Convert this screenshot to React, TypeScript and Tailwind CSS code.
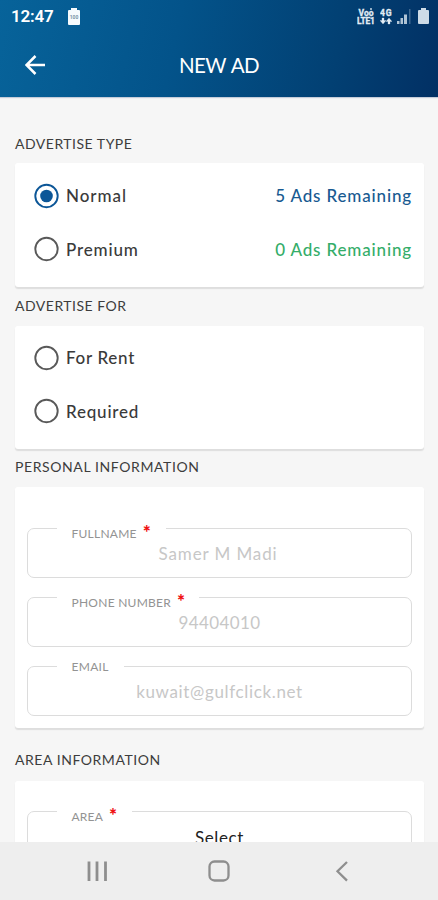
import type { ReactNode } from 'react';

function StatusBar() {
  return (
    <div className="flex h-8 items-center pl-[11px] pr-[9px] text-white">
      <span className="w-[57px] font-[Roboto,sans-serif] text-[17px] leading-none font-semibold tracking-[-0.200px]">12:47</span>
      <svg width="12" height="17" viewBox="0 0 12 17">
        <path d="M3 0h6v2h2q1 0 1 1v13q0 1-1 1H1q-1 0-1-1V3q0-1 1-1h2z" fill="#f6fafd" />
        <text x="6" y="11" textAnchor="middle" fontSize="5" fontWeight="700" fontFamily="Roboto, sans-serif" fill="#7894a8">100</text>
      </svg>
      <div className="ml-auto flex items-center font-[Roboto,sans-serif] font-bold text-[#e3edf5]">
        <svg className="mr-[5px]" width="18" height="17" viewBox="0 0 18 17" fill="#e3edf5" stroke="#e3edf5" strokeWidth="0.300">
          <text x="1.500" y="7.500" fontSize="8.500" fontWeight="700" textLength="15" fontFamily="Roboto, sans-serif">Voo</text>
          <path d="M14 0v2" strokeWidth="1.300" />
          <text x="0" y="16" fontSize="8.500" fontWeight="700" textLength="18" fontFamily="Roboto, sans-serif">LTE1</text>
        </svg>
        <svg width="12" height="17" viewBox="0 0 12 17" fill="#e3edf5" stroke="#e3edf5" strokeWidth="0.300">
          <text x="0" y="7.500" fontSize="8.500" fontWeight="700" textLength="11.500" fontFamily="Roboto, sans-serif">4G</text>
          <path d="M2 10h2v2.500h2l-3 3.500-3-3.500h2zM8 16v-2.500H6L9 10l3 3.500h-2V16z" />
        </svg>
        <svg className="ml-[5px]" width="14" height="15" viewBox="0 0 14 15" fill="#cfdde8">
          <path d="M0 12h2.500v3H0zM3.500 9H6v6H3.500zM7 5.500h3V15H7z" opacity=".85" />
          <path d="M12 0h1.500v15H12z" opacity=".3" />
        </svg>
        <svg className="ml-[7px]" width="11" height="16" viewBox="0 0 11 16">
          <path d="M3 0h5v2h2q1 0 1 1v12q0 1-1 1H1q-1 0-1-1V3q0-1 1-1h2z" fill="#cddbe7" />
        </svg>
      </div>
    </div>
  );
}

function Heading({ children, className }: { children: ReactNode; className: string }) {
  return <h2 className={`pl-[15px] text-[14px] leading-5 text-[#3d3d3d] ${className}`}>{children}</h2>;
}

function Card({ children, className }: { children: ReactNode; className: string }) {
  return (
    <section className={`ml-[15px] mr-[14px] rounded-[3px] bg-white shadow-[0_2px_1px_#dedede] ${className}`}>
      {children}
    </section>
  );
}

function Option({ label, tracking, checked, note, noteColor }: {
  label: string; tracking: string; checked?: boolean; note?: string; noteColor?: string;
}) {
  return (
    <div className="flex h-[53.500px] items-center pl-[18.500px] pr-[12px] text-[17px] font-medium">
      <svg width="26" height="26" viewBox="0 0 26 26" fill="none">
        <circle cx="12.500" cy="13" r="11.200" stroke={checked ? '#0c5697' : '#595959'} strokeWidth="1.900" />
        {checked && <circle cx="12.500" cy="13" r="6.300" fill="#0c5697" />}
      </svg>
      <span className={`ml-[6.500px] text-[#3a3a3a] ${tracking}`}>{label}</span>
      {note && <span className={`ml-auto tracking-[0.850px] ${noteColor}`}>{note}</span>}
    </div>
  );
}

function Field({ label, required, value, notch, labelClass, valueClass }: {
  label: string; required?: boolean; value: string; notch: string; labelClass: string; valueClass: string;
}) {
  return (
    <fieldset className="h-[50px] shrink-0 rounded-[7px] border-[1.500px] border-[#dcdcdc]">
      <legend className={`ml-[29px] h-px ${notch}`}>
        <span className={`flex h-4 pl-[14.500px] text-[12px] leading-4 text-[#939393] ${labelClass}`}>
          {label}
          {required && <span className="-mt-[2.500px] ml-[6px] text-[19px] leading-4 font-black tracking-normal text-[#f01010]">*</span>}
        </span>
      </legend>
      <div className={`mt-[13px] text-center text-[17px] leading-6 whitespace-nowrap ${valueClass}`}>{value}</div>
    </fieldset>
  );
}

export default function App() {
  return (
    <div className="flex h-[900px] w-[438px] flex-col overflow-hidden bg-[#f6f6f6] font-[Lato,sans-serif]">
      <header className="h-[97px] shrink-0 bg-[linear-gradient(102deg,#07639a_0%,#03538a_40%,#024073_76%,#023064_100%)] shadow-[0_1px_1px_#c5ccd9]">
        <StatusBar />
        <div className="grid h-[65px] grid-cols-[70px_1fr_70px] items-center text-white">
          <svg className="ml-[25px]" width="20" height="20" viewBox="0 0 20 20" fill="none" stroke="white" strokeWidth="2.500">
            <path d="M10.500 1L1.500 10l9 9M1.500 10H20" />
          </svg>
          <h1 className="pt-[2px] text-center text-[20.500px] tracking-[-0.550px] [word-spacing:1px]">NEW AD</h1>
        </div>
      </header>
      <main className="min-h-0 flex-1 overflow-hidden">
        <Heading className="mt-[37px] tracking-[0.500px]">ADVERTISE TYPE</Heading>
        <Card className="mt-[9px] h-[124px] pt-[6px]">
          <Option label="Normal" tracking="tracking-[0.950px]" checked note="5 Ads Remaining" noteColor="text-[#185a91]" />
          <Option label="Premium" tracking="tracking-[0.850px]" note="0 Ads Remaining" noteColor="text-[#34ad69]" />
        </Card>
        <Heading className="mt-[9px] tracking-[0.500px]">ADVERTISE FOR</Heading>
        <Card className="mt-[10px] h-[123px] pt-[5px]">
          <Option label="For Rent" tracking="tracking-[0.700px]" />
          <Option label="Required" tracking="tracking-[0.800px]" />
        </Card>
        <Heading className="mt-[8px] tracking-[0.600px]">PERSONAL INFORMATION</Heading>
        <Card className="mt-[10px] flex h-[241px] flex-col gap-[19px] px-[12px] pt-[41px]">
          <Field label="FULLNAME" required value="Samer M Madi" notch="w-[109px]" labelClass="-mt-[2px] tracking-[0.250px]" valueClass="tracking-[0.900px] text-[#c7c7c7] pr-[3px]" />
          <Field label="PHONE NUMBER" required value="94404010" notch="w-[142px]" labelClass="-mt-[2px] tracking-[0.250px]" valueClass="tracking-[0.400px] text-[#c7c7c7]" />
          <Field label="EMAIL" value="kuwait@gulfclick.net" notch="w-[67px]" labelClass="-mt-[7px] tracking-[0.300px]" valueClass="tracking-[0.650px] text-[#c7c7c7]" />
        </Card>
        <Heading className="mt-[22px] tracking-[0.550px]">AREA INFORMATION</Heading>
        <Card className="mt-[11px] h-[123px] px-[12px] pt-[30px]">
          <Field label="AREA" required value="Select" notch="w-[75px]" labelClass="-mt-[2px] tracking-[0.200px]" valueClass="pt-px tracking-[0.600px] text-[#222]" />
        </Card>
      </main>
      <nav className="h-[58px] shrink-0 bg-[#eeeeee]">
        <svg width="438" height="58" viewBox="0 0 438 58" fill="none" stroke="#8e8e8e" strokeWidth="2.300">
          <path d="M89 19.500v19.500M97 19.500v19.500M105.500 19.500v19.500" strokeWidth="2.800" />
          <rect x="209.500" y="19.500" width="19" height="19" rx="5" />
          <path d="M347 20l-9.500 9.300 9.500 9.300" />
        </svg>
      </nav>
    </div>
  );
}
